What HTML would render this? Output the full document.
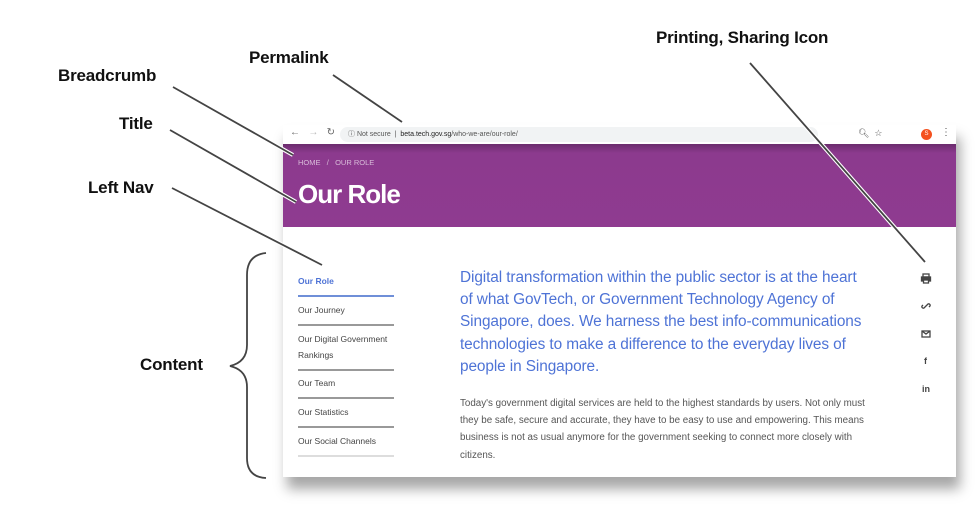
<!DOCTYPE html>
<html><head><meta charset="utf-8"><style>
body{margin:0;width:976px;height:531px;background:#fff;position:relative;overflow:hidden;font-family:"Liberation Sans",sans-serif}
.lbl{position:absolute;font-size:17px;font-weight:bold;color:#111;white-space:nowrap;letter-spacing:-0.2px}
#shot{position:absolute;left:283px;top:125px;width:673px;height:352px;background:#fff;box-shadow:4px 12px 12px rgba(0,0,0,0.35)}
#bar{position:absolute;left:0;top:0;width:673px;height:19px;background:#fff}
#url{position:absolute;left:57px;top:2px;width:470px;height:15px;background:#f1f3f4;border-radius:8px;font-size:7px;color:#555;line-height:15px;padding-left:8px;white-space:nowrap}
#hero{position:absolute;left:0;top:19px;width:673px;height:83px;background:linear-gradient(#6b2c6d 0,#8c3a8e 9px,#8f3b90 100%)}
.t{position:absolute;white-space:nowrap}
.nav{position:absolute;left:15px;font-size:8.5px;color:#444}
.ln{position:absolute;left:15px;width:96px;height:1.5px;background:#999}
.h{position:absolute;left:177px;font-size:15.4px;color:#4e73d6;letter-spacing:-0.1px;white-space:nowrap}
.b{position:absolute;left:177px;font-size:9.8px;color:#555;white-space:nowrap}
</style></head><body>
<div class="lbl" style="left:249px;top:48px">Permalink</div>
<div class="lbl" style="left:58px;top:66px">Breadcrumb</div>
<div class="lbl" style="left:119px;top:114px">Title</div>
<div class="lbl" style="left:88px;top:178px">Left Nav</div>
<div class="lbl" style="left:140px;top:355px">Content</div>
<div class="lbl" style="left:656px;top:28px">Printing, Sharing Icon</div>

<div id="shot">
 <div id="bar">
  <div class="t" style="left:7px;top:2px;font-size:10px;color:#666">←&nbsp;&nbsp;&nbsp;<span style="color:#bbb">→</span>&nbsp;&nbsp;&nbsp;↻</div>
  <div id="url">ⓘ Not secure &nbsp;|&nbsp; <span style="color:#222">beta.tech.gov.sg</span>/who-we-are/our-role/</div>
  <div class="t" style="left:575px;top:3px;font-size:9px;color:#555">🔍︎&nbsp;&nbsp;☆&nbsp;&nbsp;&nbsp;</div>
  <div style="position:absolute;left:638px;top:4px;width:11px;height:11px;border-radius:50%;background:#f4511e;color:#fff;font-size:6px;text-align:center;line-height:11px">S</div>
  <div class="t" style="left:658px;top:2px;font-size:10px;color:#555">⋮</div>
 </div>
 <div id="hero">
  <div class="t" style="left:15px;top:14px;font-size:7.5px;color:#d8bcd9">HOME &nbsp;&nbsp;/&nbsp;&nbsp; OUR ROLE</div>
  <div class="t" style="left:15px;top:35px;font-size:26px;font-weight:bold;color:#fff;letter-spacing:-1px">Our Role</div>
 </div>
 <div class="nav" style="top:151px;color:#4e73d6;font-weight:bold">Our Role</div>
 <div class="ln" style="top:170px;background:#6f8fd8"></div>
 <div class="nav" style="top:180px">Our Journey</div>
 <div class="ln" style="top:199px"></div>
 <div class="nav" style="top:209px">Our Digital Government</div>
 <div class="nav" style="top:225px">Rankings</div>
 <div class="ln" style="top:244px"></div>
 <div class="nav" style="top:253px">Our Team</div>
 <div class="ln" style="top:272px"></div>
 <div class="nav" style="top:282px">Our Statistics</div>
 <div class="ln" style="top:301px"></div>
 <div class="nav" style="top:311px">Our Social Channels</div>
 <div class="ln" style="top:330px;background:#ddd"></div>

 <div class="h" style="top:144px">Digital transformation within the public sector is at the heart</div>
 <div class="h" style="top:166px">of what GovTech, or Government Technology Agency of</div>
 <div class="h" style="top:188px">Singapore, does. We harness the best info-communications</div>
 <div class="h" style="top:211px">technologies to make a difference to the everyday lives of</div>
 <div class="h" style="top:233px">people in Singapore.</div>
 <div class="b" style="top:273px">Today's government digital services are held to the highest standards by users. Not only must</div>
 <div class="b" style="top:290px">they be safe, secure and accurate, they have to be easy to use and empowering. This means</div>
 <div class="b" style="top:307px">business is not as usual anymore for the government seeking to connect more closely with</div>
 <div class="b" style="top:325px">citizens.</div>

 <svg style="position:absolute;left:636px;top:146px" width="16" height="124" viewBox="0 0 16 124" fill="none" stroke="#444" stroke-width="1.3">
  <rect x="4" y="3" width="6" height="3"/><rect x="2.5" y="6" width="9" height="4" fill="#444"/><rect x="4.5" y="9" width="5" height="3" fill="#fff"/>
  <path d="M5 37 l4 -4 M4 34 l-1 1 a1.5 1.5 0 0 0 2 2 l1-1 M10 36 l1-1 a1.5 1.5 0 0 0 -2 -2 l-1 1"/>
  <rect x="3" y="60" width="8" height="6"/><path d="M3 60 l4 3 l4 -3"/>
  <text x="5" y="93" font-size="9" font-weight="bold" fill="#444" stroke="none" font-family="Liberation Sans">f</text>
  <text x="3" y="121" font-size="9" font-weight="bold" fill="#444" stroke="none" font-family="Liberation Sans">in</text>
 </svg>
</div>

<svg style="position:absolute;left:0;top:0" width="976" height="531" fill="none">
 <g stroke="#fff" stroke-width="4">
  <path d="M333 75 L402 122 M173 87 L293 155 M170 130 L296 202 M172 188 L322 265 M750 63 L925 262"/>
 </g>
 <g stroke="#444" stroke-width="1.8">
  <path d="M333 75 L402 122 M173 87 L293 155 M170 130 L296 202 M172 188 L322 265 M750 63 L925 262"/>
  <path d="M266 253 Q247 255 247 275 L247 345 Q247 362 230 366 Q247 370 247 387 L247 458 Q247 477 266 478"/>
 </g>
</svg>
</body></html>
